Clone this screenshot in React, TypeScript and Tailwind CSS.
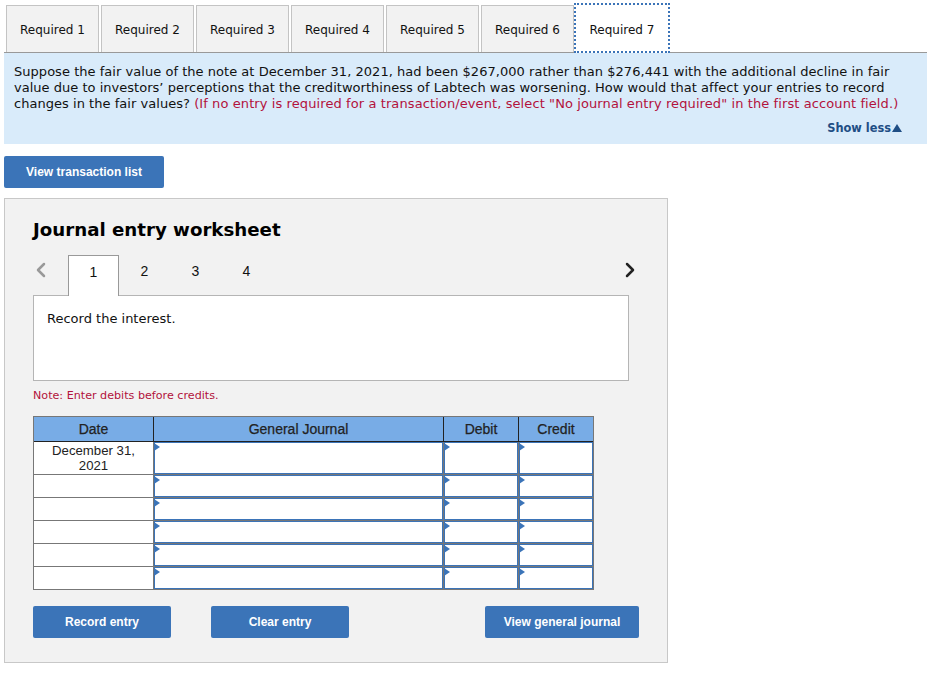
import React from 'react';
import { ChevronLeft, ChevronRight } from 'lucide-react';

const tabs = ['Required 1', 'Required 2', 'Required 3', 'Required 4', 'Required 5', 'Required 6'];

const Cell: React.FC<{ className: string }> = ({ className }) => (
  <div className={`relative bg-white border border-[#3b74b8] ${className}`}>
    <span className="absolute -left-[1px] top-0 w-0 h-0 border-y-[4px] border-y-transparent border-l-[6px] border-l-[#3b74b8]" />
  </div>
);

const Row: React.FC<{ tall?: boolean; date?: boolean }> = ({ tall, date }) => (
  <div className={`flex gap-px bg-[#777] pb-px ${tall ? 'h-[33px]' : 'h-[23px]'}`}>
    <div className="w-[119px] shrink-0 bg-white text-center text-[13.2px] leading-[15px] pt-px text-[#222]">
      {date && <>December 31,<br />2021</>}
    </div>
    <Cell className="w-[289px] shrink-0" />
    <Cell className="w-[74px] shrink-0" />
    <Cell className="w-[74px] shrink-0" />
  </div>
);

const Button: React.FC<{ label: string; className: string }> = ({ label, className }) => (
  <button className={`h-8 rounded-[2px] bg-[#3b74b8] text-white text-[12px] font-bold font-['Liberation_Sans',sans-serif] ${className}`}>
    {label}
  </button>
);

const App: React.FC = () => (
  <div className="w-[937px] h-[673px] bg-white text-[13px] text-[#111] font-['DejaVu_Sans',Verdana,sans-serif] overflow-hidden">
    <div className="flex gap-[2px] pl-[6px] pt-[5px] h-[52px]">
      {tabs.map((t) => (
        <div key={t} className="w-[93px] h-[47px] pt-px flex items-center justify-center border border-b-0 border-[#c4c4c4] bg-[#f2f2f2] text-[12px]">
          {t}
        </div>
      ))}
      <div className="w-[96px] h-[50px] -mt-[2px] -ml-[2px] relative z-10 pt-[3px] flex items-center justify-center border-2 border-dotted border-[#3b74b8] bg-white text-[12px]">
        Required 7
      </div>
    </div>

    <div className="ml-[4px] w-[923px] h-[92px] border-t border-[#999] bg-[#d9ebfa] px-[10px] pt-[11px] relative">
      <p className="leading-[16px] whitespace-nowrap tracking-[0.035px]">
        Suppose the fair value of the note at December 31, 2021, had been $267,000 rather than $276,441 with the additional decline in fair<br />
        <span className="tracking-[0.02px]">value due to investors’ perceptions that the creditworthiness of Labtech was worsening. How would that affect your entries to record</span><br />
        changes in the fair values? <span className="text-[#b3123c] tracking-[0.095px]">(If no entry is required for a transaction/event, select "No journal entry required" in the first account field.)</span>
      </p>
      <div className="absolute right-[25px] bottom-[7px] flex items-center gap-[1px] text-[11.4px] font-bold text-[#1f4e85]">
        Show less
        <span className="w-0 h-0 border-x-[5px] border-x-transparent border-b-[8px] border-b-[#1f4e85]" />
      </div>
    </div>

    <Button label="View transaction list" className="block ml-[4px] mt-[12px] w-[160px]" />

    <div className="ml-[4px] mt-[10px] w-[664px] h-[465px] border border-[#c8c8c8] bg-[#f2f2f2] px-[28px] pt-[19px]">
      <h1 className="text-[18.2px] leading-[24px] font-bold text-black">Journal entry worksheet</h1>

      <div className="flex items-start h-[40px] mt-[13px] w-[596px] relative">
        <ChevronLeft className="mt-[3px] w-[24px] h-[24px] -ml-[4px] text-[#999]" strokeWidth={2.5} />
        <div className="ml-[15px] w-[51px] h-[41px] border border-b-0 border-[#999] bg-white relative z-10 flex justify-center pt-[6px] text-[14px] font-['Liberation_Sans',sans-serif]">1</div>
        {['2', '3', '4'].map((n) => (
          <div key={n} className="w-[51px] flex justify-center pt-[6px] text-[14px] font-['Liberation_Sans',sans-serif]">{n}</div>
        ))}
        <ChevronRight className="absolute right-[-13px] top-[3px] w-[24px] h-[24px] text-[#222]" strokeWidth={2.5} />
      </div>

      <div className="w-[596px] h-[86px] border border-[#b5b5b5] bg-white px-[13px] pt-[15px] leading-[16px]">Record the interest.</div>

      <p className="mt-[7px] text-[11.15px] leading-[16px] text-[#b3123c]">Note: Enter debits before credits.</p>

      <div className="mt-[12px] w-[561px] border-x border-t border-[#777] font-['Liberation_Sans',sans-serif]">
        <div className="flex h-[25px] bg-[#78ace6] border-b border-[#222] text-[14px] leading-[25px] text-center text-[#222] [-webkit-text-stroke:0.25px_#222]">
          <div className="w-[120px] shrink-0 border-r border-[#222]">Date</div>
          <div className="w-[290px] shrink-0 border-r border-[#222]">General Journal</div>
          <div className="w-[75px] shrink-0 border-r border-[#222]">Debit</div>
          <div className="w-[74px] shrink-0">Credit</div>
        </div>
        <Row tall date />
        <Row />
        <Row />
        <Row />
        <Row />
        <Row />
      </div>

      <div className="flex mt-[16px]">
        <Button label="Record entry" className="w-[138px]" />
        <Button label="Clear entry" className="w-[138px] ml-[40px]" />
        <Button label="View general journal" className="w-[154px] ml-[136px]" />
      </div>
    </div>
  </div>
);

export default App;
